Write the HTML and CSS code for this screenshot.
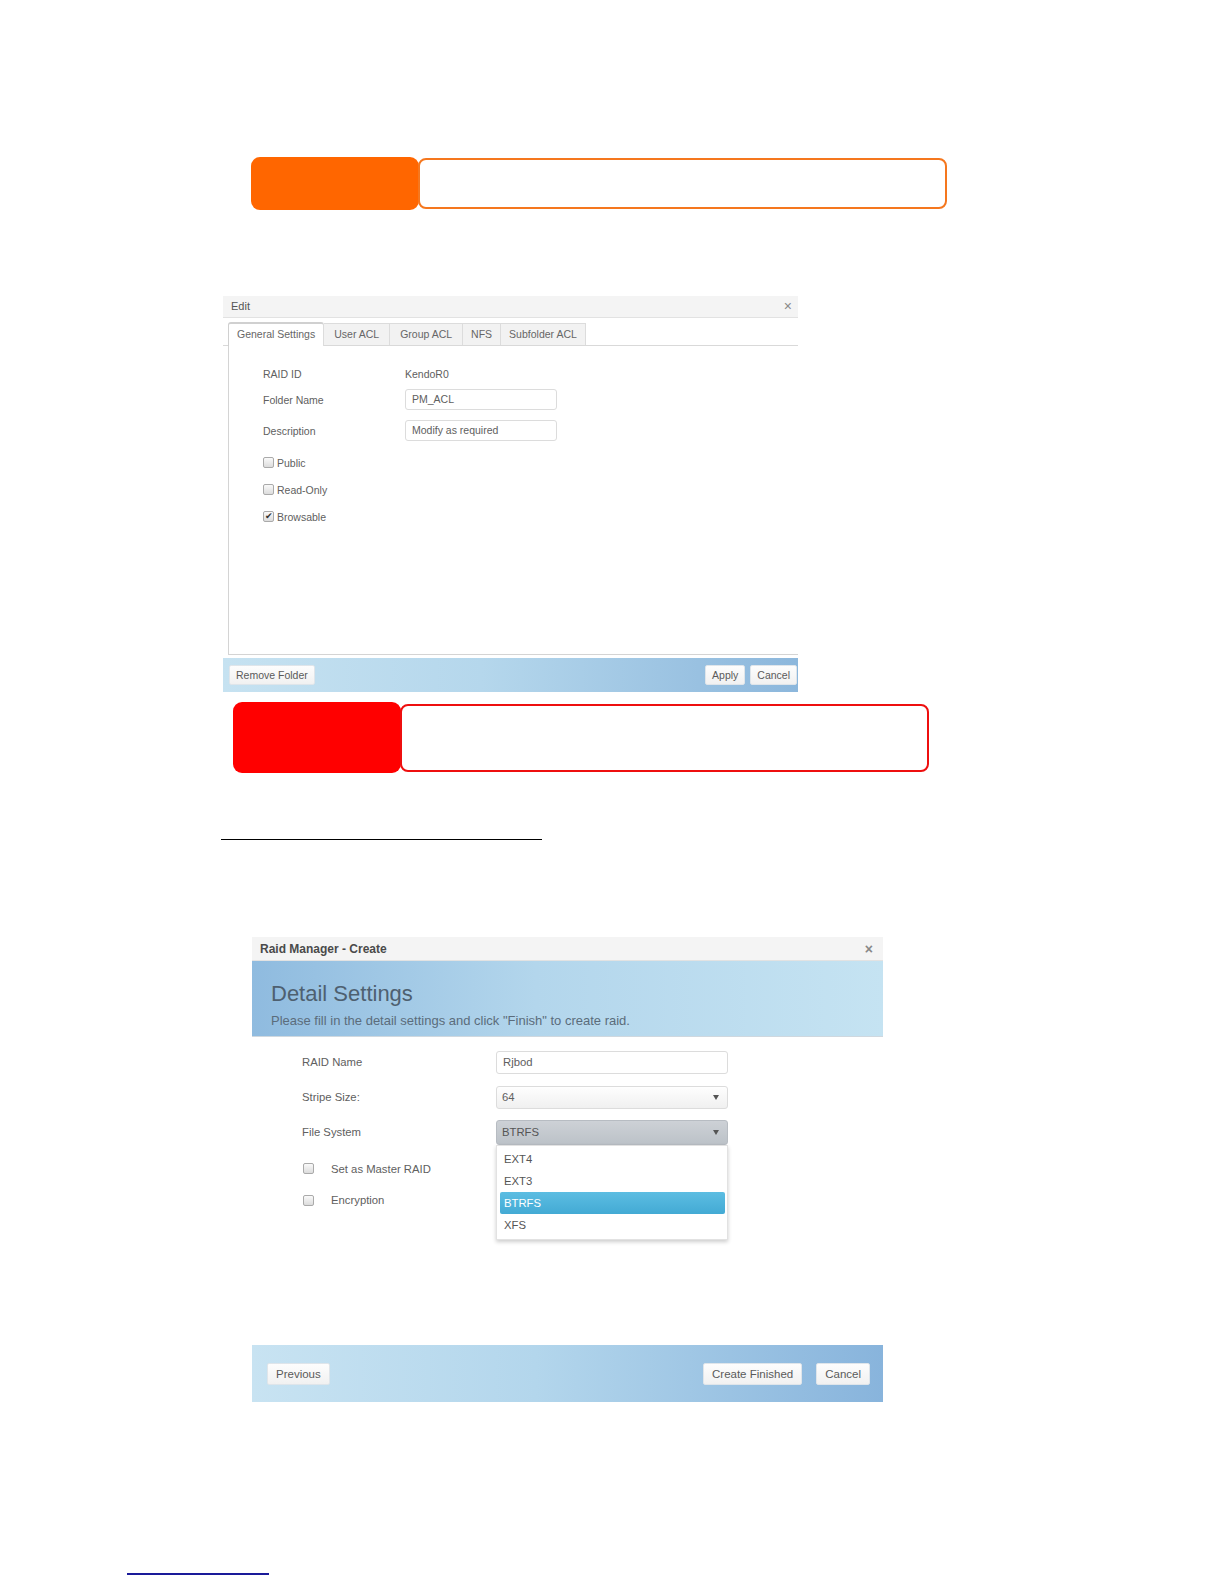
FILE: index.html
```html
<!DOCTYPE html>
<html lang="en">
<head>
    <meta charset="UTF-8">
    <title>Share Folder / RAID Create</title>
    <link rel="stylesheet" href="styles.css">
</head>
<body>
    <div class="page">
        <!-- orange note box -->
        <div class="callout callout-orange">
            <div class="callout-tag"></div>
            <div class="callout-box"></div>
        </div>

        <!-- Edit folder dialog -->
        <div class="dialog edit-dialog">
            <div class="dialog-title">
                <span>Edit</span>
                <span class="dialog-close">&times;</span>
            </div>
            <div class="tabs">
                <div class="tab active">General Settings</div>
                <div class="tab">User ACL</div>
                <div class="tab">Group ACL</div>
                <div class="tab">NFS</div>
                <div class="tab">Subfolder ACL</div>
            </div>
            <div class="tab-panel">
                <div class="edit-form">
                    <div class="label">RAID ID</div>
                    <div class="value">KendoR0</div>

                    <div class="label">Folder Name</div>
                    <div class="value"><div class="text-input">PM_ACL</div></div>

                    <div class="label">Description</div>
                    <div class="value"><div class="text-input">Modify as required</div></div>

                    <div class="check-row"><span class="checkbox"></span>Public</div>
                    <div class="check-row"><span class="checkbox"></span>Read-Only</div>
                    <div class="check-row"><span class="checkbox checked">&#10004;</span>Browsable</div>
                </div>
            </div>
            <div class="dialog-footer edit-footer">
                <button class="btn">Remove Folder</button>
                <div class="btn-group">
                    <button class="btn">Apply</button>
                    <button class="btn">Cancel</button>
                </div>
            </div>
        </div>

        <!-- red note box -->
        <div class="callout callout-red">
            <div class="callout-tag"></div>
            <div class="callout-box"></div>
        </div>

        <div class="rule"></div>

        <!-- RAID create dialog -->
        <div class="dialog raid-dialog">
            <div class="dialog-title raid-title">
                <span>Raid Manager - Create</span>
                <span class="dialog-close">&times;</span>
            </div>
            <div class="wizard-head">
                <h2>Detail Settings</h2>
                <p>Please fill in the detail settings and click "Finish" to create raid.</p>
            </div>
            <div class="wizard-body">
                <div class="raid-form">
                    <div class="label">RAID Name</div>
                    <div class="text-input">Rjbod</div>

                    <div class="label">Stripe Size:</div>
                    <div class="select">64<span class="caret"></span></div>

                    <div class="label">File System</div>
                    <div class="select-wrap">
                        <div class="select open">BTRFS<span class="caret"></span></div>
                        <ul class="dropdown">
                            <li>EXT4</li>
                            <li>EXT3</li>
                            <li class="selected">BTRFS</li>
                            <li>XFS</li>
                        </ul>
                    </div>

                    <div class="check-row"><span class="checkbox"></span>Set as Master RAID</div>
                    <div class="check-row"><span class="checkbox"></span>Encryption</div>
                </div>
            </div>
            <div class="dialog-footer raid-footer">
                <button class="btn">Previous</button>
                <div class="btn-group">
                    <button class="btn">Create Finished</button>
                    <button class="btn">Cancel</button>
                </div>
            </div>
        </div>

        <div class="link-line"></div>
    </div>
</body>
</html>
```

FILE: styles.css
```css
body {
    margin: 0;
    background-color: #fff;
    font-family: "Liberation Sans", Arial, sans-serif;
    color: #555;
}
.page {
    display: flex;
    flex-direction: column;
    align-items: flex-start;
    height: 1584px;
}

/* note boxes */
.callout {
    display: flex;
    align-items: center;
}
.callout-orange {
    margin: 157px 0 0 251px;
}
.callout-red {
    margin: 10px 0 0 233px;
}
.callout-tag {
    width: 168px;
    border-radius: 9px;
}
.callout-box {
    width: 525px;
    margin-left: -1px;
    border-radius: 8px;
    background-color: #fff;
}
.callout-orange .callout-tag {
    height: 53px;
    background-color: #ff6600;
}
.callout-orange .callout-box {
    height: 47px;
    border: 2px solid #f5771e;
}
.callout-red .callout-tag {
    height: 71px;
    background-color: #ff0000;
}
.callout-red .callout-box {
    height: 64px;
    border: 2px solid #ee0f0f;
}

/* dialogs */
.dialog {
    display: flex;
    flex-direction: column;
    background-color: #fff;
}
.dialog-title {
    display: flex;
    justify-content: space-between;
    align-items: center;
    padding: 0 6px 0 8px;
    background-color: #f4f4f4;
    border-bottom: 1px solid #e2e2e2;
    font-size: 11px;
    color: #555;
}
.dialog-close {
    font-size: 14px;
    color: #888;
}
.dialog-footer {
    display: flex;
    justify-content: space-between;
    align-items: center;
}
.btn-group {
    display: flex;
}
.btn {
    margin: 0;
    padding: 0 6px;
    border: 1px solid #dfe5ea;
    border-radius: 2px;
    background: linear-gradient(#fdfdfd, #f1f1f1);
    font-family: "Liberation Sans", Arial, sans-serif;
    color: #5a5a5a;
}

/* Edit dialog */
.edit-dialog {
    margin: 86px 0 0 223px;
    width: 575px;
    height: 396px;
}
.edit-dialog .dialog-title {
    height: 21px;
}
.tabs {
    display: flex;
    align-items: flex-end;
    height: 27px;
    padding-left: 5px;
    border-bottom: 1px solid #d9d9d9;
}
.tab {
    height: 21px;
    line-height: 21px;
    padding: 0 10px;
    border: 1px solid #dcdcdc;
    border-bottom: none;
    border-left: none;
    background-color: #f2f2f2;
    font-size: 10.5px;
    color: #666;
}
.tab.active {
    padding: 0 8px;
    border-left: 1px solid #d0d0d0;
    border-top: 2px solid #d0d0d0;
    border-radius: 3px 3px 0 0;
    background-color: #fff;
    margin-bottom: -1px;
    height: 22px;
}
.tab:nth-child(4),
.tab:nth-child(5) {
    padding: 0 8px;
}
.tab-panel {
    height: 310px;
    margin-left: 5px;
    border-left: 1px solid #d4d4d4;
    border-bottom: 1px solid #d4d4d4;
    box-sizing: border-box;
}
.edit-form {
    display: grid;
    grid-template-columns: 142px 152px;
    grid-template-rows: 26px 26px 36px 28px 26px 28px;
    align-items: center;
    padding: 15px 0 0 34px;
    font-size: 10.5px;
    color: #606060;
}
.text-input {
    box-sizing: border-box;
    height: 21px;
    line-height: 19px;
    padding: 0 6px;
    border: 1px solid #dcdcdc;
    border-radius: 3px;
    background-color: #fff;
}
.check-row {
    grid-column: 1 / 3;
    display: flex;
    align-items: center;
}
.checkbox {
    display: inline-block;
    box-sizing: border-box;
    width: 11px;
    height: 11px;
    margin-right: 3px;
    border: 1px solid #aaa;
    border-radius: 2px;
    background: linear-gradient(#fafafa, #dcdcdc);
    font-size: 9px;
    line-height: 9px;
    text-align: center;
    color: #333;
}
.edit-footer {
    margin-top: 3px;
    height: 34px;
    padding: 0 1px 0 6px;
    background: linear-gradient(to right, #c6e2f1, #b5d7ec 45%, #8cb7dc);
}
.edit-footer .btn {
    height: 20px;
    font-size: 10.5px;
}
.edit-footer .btn-group {
    gap: 5px;
}

/* separator and link */
.rule {
    margin: 66px 0 0 221px;
    width: 321px;
    height: 1px;
    background-color: #000;
}
.link-line {
    margin: 171px 0 0 127px;
    width: 142px;
    height: 2px;
    background-color: #1a1a99;
}

/* RAID dialog */
.raid-dialog {
    margin: 97px 0 0 252px;
    width: 631px;
    height: 465px;
}
.raid-title {
    height: 23px;
    font-size: 12px;
    font-weight: bold;
    color: #4a4a4a;
    padding-right: 10px;
}
.wizard-head {
    height: 76px;
    box-sizing: border-box;
    padding: 20px 0 0 19px;
    background: linear-gradient(to right, #8fbbdf, #b3d6ec 45%, #c5e3f2);
    border-bottom: 1px solid #cfd8df;
}
.wizard-head h2 {
    margin: 0;
    font-size: 22px;
    font-weight: normal;
    line-height: 26px;
    color: #4e6070;
}
.wizard-head p {
    margin: 6px 0 0;
    font-size: 13px;
    color: #5b6c7b;
}
.wizard-body {
    flex: 1;
}
.raid-form {
    display: grid;
    grid-template-columns: 194px 232px;
    grid-template-rows: 24px 24px 24px 20px 20px;
    row-gap: 11px;
    align-items: center;
    padding: 13px 0 0 50px;
    font-size: 11.3px;
    color: #606060;
}
.raid-form .text-input {
    height: 23px;
    line-height: 21px;
    font-size: 11.3px;
}
.select {
    position: relative;
    box-sizing: border-box;
    height: 23px;
    line-height: 21px;
    padding: 0 5px;
    border: 1px solid #dcdcdc;
    border-radius: 3px;
    background: linear-gradient(#fefefe, #f0f0f0);
}
.select.open {
    height: 25px;
    line-height: 23px;
    border-color: #b7bcc2;
    background: linear-gradient(#cdd1d6, #bcc2c8);
    color: #555;
}
.caret {
    position: absolute;
    right: 8px;
    top: 50%;
    margin-top: -2px;
    border-left: 3px solid transparent;
    border-right: 3px solid transparent;
    border-top: 5px solid #555;
}
.select-wrap {
    position: relative;
}
.dropdown {
    position: absolute;
    top: 25px;
    left: 0;
    width: 232px;
    margin: 0;
    padding: 2px 2px 3px 3px;
    box-sizing: border-box;
    list-style: none;
    background-color: #fff;
    border: 1px solid #e2e2e2;
    box-shadow: 0 2px 4px rgba(0, 0, 0, 0.2);
    z-index: 2;
}
.dropdown li {
    height: 22px;
    line-height: 22px;
    padding-left: 4px;
    border-radius: 2px;
    color: #555;
}
.dropdown li.selected {
    background: linear-gradient(#5cbde2, #43aad4);
    color: #fff;
}
.raid-form .check-row:nth-last-child(2) {
    margin-top: 7px;
}
.raid-form .check-row:last-child {
    margin-top: 8px;
}
.raid-form .checkbox {
    margin: 0 17px 0 1px;
}
.raid-footer {
    height: 57px;
    padding: 0 13px 0 15px;
    background: linear-gradient(to right, #c8e3f2, #b3d6ec 45%, #88b4dc);
}
.raid-footer .btn {
    height: 22px;
    padding: 0 8px;
    font-size: 11.5px;
}
.raid-footer .btn-group {
    gap: 14px;
}
```
